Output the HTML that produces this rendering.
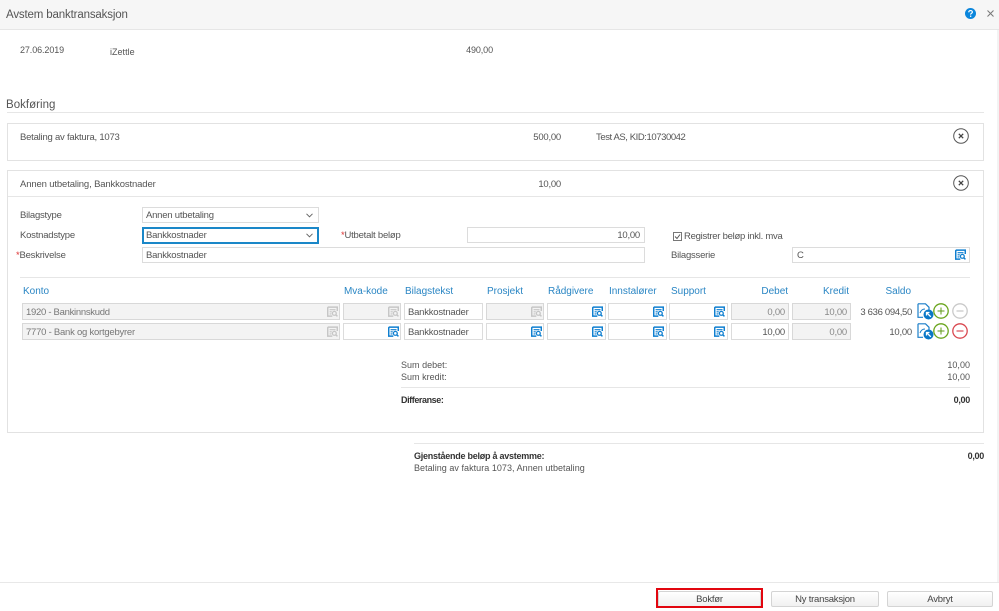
<!DOCTYPE html>
<html><head><meta charset="utf-8"><style>
html,body{margin:0;padding:0;background:#fff}
#p{position:relative;width:999px;height:611px;overflow:hidden;background:#fff;font-family:"Liberation Sans",sans-serif;font-size:9.5px;color:#555;letter-spacing:-.22px;filter:blur(.3px)}
.t{position:absolute;white-space:nowrap;line-height:12px;margin-top:1px}
.r{text-align:right}
.m{font-size:9px;letter-spacing:.02px;margin-top:0}
.w{font-weight:bold;color:#333;letter-spacing:-.28px}
.b{position:absolute;box-sizing:border-box;border:1px solid #dcdcdc;background:#fff}
.d{background:#f3f3f3;border-color:#d8d8d8}
.l{position:absolute;background:#e6e6e6;height:1px}
.h{position:absolute;white-space:nowrap;line-height:12px;color:#2a86c4;font-size:10px;letter-spacing:-.02px;margin-top:1px}
.s{color:#d33}
.btn{position:absolute;box-sizing:border-box;height:16px;top:591px;border:1px solid #d4d4d4;border-radius:2px;background:linear-gradient(#fff,#f0f0f0);text-align:center;line-height:15px;color:#444}
svg{position:absolute;overflow:visible}
</style></head><body><div id="p">
<svg width="0" height="0"><defs>
<symbol id="lk" viewBox="0 0 12 12"><path d="M.8 1.200h10.400v4.300M.8 1.200v9.800h5" fill="none" stroke="currentColor" stroke-width="1.600"/><path d="M2.800 4h6.500M2.800 6.300h2.400M2.800 8.700h2" stroke="currentColor" stroke-width="1.200"/><circle cx="8" cy="8" r="2.100" fill="none" stroke="currentColor" stroke-width="1.400"/><path d="M9.600 9.600l1.800 1.700" stroke="currentColor" stroke-width="1.600"/></symbol>
<symbol id="doc" viewBox="0 0 17 17"><path d="M1 .8h7.500l3.500 3.500v3M1 .8v13.500h5" fill="none" stroke="#1b7fc9" stroke-width="1.200"/><path d="M3 10c1-3 3-4 5-4" fill="none" stroke="#1b7fc9" stroke-width="1"/><circle cx="11.500" cy="11.500" r="5" fill="#0b78c8"/><path d="M13.800 13.800L10 10M9.500 12.500V9.500h3" fill="none" stroke="#fff" stroke-width="1.300"/></symbol>
</defs></svg>

<div style="position:absolute;left:0;top:0;width:999px;height:29px;background:#f6f6f6;border-bottom:1px solid #e6e6e6"></div>
<div style="position:absolute;left:997px;top:30px;width:2px;height:552px;background:#f3f3f3"></div>
<div class="t" style="left:6px;top:8px;font-size:11.500px;letter-spacing:-.15px;color:#555">Avstem banktransaksjon</div>
<svg style="left:965px;top:8px" width="11" height="11"><circle cx="5.500" cy="5.500" r="5.500" fill="#0b86dc"/><path d="M3.700 4.300C3.800 2 7.400 2 7.400 4.100 7.400 5.300 5.600 5.300 5.600 6.600" fill="none" stroke="#fff" stroke-width="1.200"/><rect x="5" y="7.600" width="1.300" height="1.300" fill="#fff"/></svg>
<svg style="left:987px;top:10px" width="7" height="7"><path d="M.5.500l6 6M6.500.500l-6 6" stroke="#777" stroke-width="1"/></svg>

<div class="t m" style="left:20px;top:44px;letter-spacing:-.1px">27.06.2019</div>
<div class="t m" style="left:110px;top:46px">iZettle</div>
<div class="t m r" style="left:440px;width:53px;top:44px;letter-spacing:-.1px">490,00</div>

<div class="t" style="left:6px;top:98px;font-size:11.500px;letter-spacing:.03px">Bokføring</div>
<div class="l" style="left:7px;top:112px;width:977px"></div>

<div class="b" style="left:7px;top:123px;width:977px;height:38px;border-color:#e2e2e2"></div>
<div class="t" style="left:20px;top:131px">Betaling av faktura, 1073</div>
<div class="t r" style="left:500px;width:61px;top:131px">500,00</div>
<div class="t" style="left:596px;top:131px;letter-spacing:-.42px">Test AS, KID:10730042</div>
<svg style="left:953px;top:128px" width="16" height="16"><circle cx="8" cy="8" r="7.300" fill="none" stroke="#555" stroke-width="1"/><path d="M5.800 5.800l4.400 4.400M10.200 5.800l-4.400 4.400" stroke="#444" stroke-width="1.300"/></svg>

<div class="b" style="left:7px;top:170px;width:977px;height:263px;border-color:#e2e2e2"></div>
<div class="l" style="left:8px;top:196px;width:975px"></div>
<div class="t" style="left:20px;top:178px;letter-spacing:-.14px">Annen utbetaling, Bankkostnader</div>
<div class="t r" style="left:500px;width:61px;top:178px">10,00</div>
<svg style="left:953px;top:175px" width="16" height="16"><circle cx="8" cy="8" r="7.300" fill="none" stroke="#555" stroke-width="1"/><path d="M5.800 5.800l4.400 4.400M10.200 5.800l-4.400 4.400" stroke="#444" stroke-width="1.300"/></svg>

<div class="t" style="left:20px;top:209px">Bilagstype</div>
<div class="b" style="left:142px;top:207px;width:177px;height:16px"></div>
<div class="t" style="left:146px;top:209px">Annen utbetaling</div>
<svg style="left:306px;top:213px" width="7" height="5"><path d="M.5.800l3 3 3-3" fill="none" stroke="#666"/></svg>

<div class="t" style="left:20px;top:229px">Kostnadstype</div>
<div class="b" style="left:142px;top:227px;width:177px;height:17px;border:2px solid #1a87c8"></div>
<div class="t" style="left:146px;top:229px">Bankkostnader</div>
<svg style="left:306px;top:233px" width="7" height="5"><path d="M.5.800l3 3 3-3" fill="none" stroke="#666"/></svg>

<div class="t" style="left:16px;top:249px"><span class="s">*</span>Beskrivelse</div>
<div class="b" style="left:142px;top:247px;width:503px;height:16px"></div>
<div class="t" style="left:146px;top:249px">Bankkostnader</div>

<div class="t" style="left:341px;top:229px"><span class="s">*</span>Utbetalt beløp</div>
<div class="b" style="left:467px;top:227px;width:178px;height:16px"></div>
<div class="t r" style="left:570px;width:70px;top:229px">10,00</div>

<svg style="left:673px;top:232px" width="9" height="9"><rect x=".5" y=".5" width="8" height="8" fill="#fff" stroke="#777"/><path d="M2 4.500l2 2 3-4" fill="none" stroke="#555"/></svg>
<div class="t" style="left:684px;top:230px;letter-spacing:-.26px">Registrer beløp inkl. mva</div>
<div class="t" style="left:671px;top:249px">Bilagsserie</div>
<div class="b" style="left:792px;top:247px;width:178px;height:16px"></div>
<div class="t" style="left:797px;top:249px">C</div>
<svg style="left:955px;top:249px;color:#0f7fd0" width="11" height="11"><use href="#lk"/></svg>

<div class="l" style="left:20px;top:277px;width:950px"></div>

<div class="h" style="left:23px;top:285px">Konto</div>
<div class="h" style="left:344px;top:285px">Mva-kode</div>
<div class="h" style="left:405px;top:285px">Bilagstekst</div>
<div class="h" style="left:487px;top:285px">Prosjekt</div>
<div class="h" style="left:548px;top:285px">Rådgivere</div>
<div class="h" style="left:609px;top:285px">Innstalører</div>
<div class="h" style="left:671px;top:285px">Support</div>
<div class="h r" style="left:730px;width:58px;top:285px">Debet</div>
<div class="h r" style="left:790px;width:59px;top:285px">Kredit</div>
<div class="h r" style="left:860px;width:51px;top:285px">Saldo</div>

<!-- row 1 -->
<div class="b d" style="left:22px;top:303px;width:318px;height:17px"></div>
<div class="t" style="left:26px;top:306px;color:#777;letter-spacing:-.29px">1920 - Bankinnskudd</div>
<svg style="left:327px;top:306px;color:#c6c6c6" width="11" height="11"><use href="#lk"/></svg>
<div class="b d" style="left:343px;top:303px;width:58px;height:17px"></div>
<svg style="left:388px;top:306px;color:#c6c6c6" width="11" height="11"><use href="#lk"/></svg>
<div class="b" style="left:404px;top:303px;width:79px;height:17px"></div>
<div class="t" style="left:408px;top:306px">Bankkostnader</div>
<div class="b d" style="left:486px;top:303px;width:58px;height:17px"></div>
<svg style="left:531px;top:306px;color:#c6c6c6" width="11" height="11"><use href="#lk"/></svg>
<div class="b" style="left:547px;top:303px;width:59px;height:17px"></div>
<svg style="left:592px;top:306px;color:#0f7fd0" width="11" height="11"><use href="#lk"/></svg>
<div class="b" style="left:608px;top:303px;width:59px;height:17px"></div>
<svg style="left:653px;top:306px;color:#0f7fd0" width="11" height="11"><use href="#lk"/></svg>
<div class="b" style="left:669px;top:303px;width:59px;height:17px"></div>
<svg style="left:714px;top:306px;color:#0f7fd0" width="11" height="11"><use href="#lk"/></svg>
<div class="b d" style="left:731px;top:303px;width:58px;height:17px"></div>
<div class="t r" style="left:740px;width:45px;top:306px;color:#888">0,00</div>
<div class="b d" style="left:792px;top:303px;width:59px;height:17px"></div>
<div class="t r" style="left:800px;width:47px;top:306px;color:#888">10,00</div>
<div class="t r" style="left:840px;width:72px;top:306px;letter-spacing:-.32px">3 636 094,50</div>
<svg style="left:917px;top:303px" width="17" height="17"><use href="#doc"/></svg>
<svg style="left:933px;top:303px" width="16" height="16"><circle cx="8" cy="8" r="7.200" fill="#fff" stroke="#6aa51d" stroke-width="1.300"/><path d="M8 4.500v7M4.500 8h7" stroke="#5f9a17" stroke-width="1"/></svg>
<svg style="left:952px;top:303px" width="16" height="16"><circle cx="8" cy="8" r="7.200" fill="#fff" stroke="#c9c9c9" stroke-width="1.300"/><path d="M4.500 8h7" stroke="#bbb" stroke-width="1"/></svg>

<!-- row 2 -->
<div class="b d" style="left:22px;top:323px;width:318px;height:17px"></div>
<div class="t" style="left:26px;top:326px;color:#777;letter-spacing:-.24px">7770 - Bank og kortgebyrer</div>
<svg style="left:327px;top:326px;color:#c6c6c6" width="11" height="11"><use href="#lk"/></svg>
<div class="b" style="left:343px;top:323px;width:58px;height:17px"></div>
<svg style="left:388px;top:326px;color:#0f7fd0" width="11" height="11"><use href="#lk"/></svg>
<div class="b" style="left:404px;top:323px;width:79px;height:17px"></div>
<div class="t" style="left:408px;top:326px">Bankkostnader</div>
<div class="b" style="left:486px;top:323px;width:58px;height:17px"></div>
<svg style="left:531px;top:326px;color:#0f7fd0" width="11" height="11"><use href="#lk"/></svg>
<div class="b" style="left:547px;top:323px;width:59px;height:17px"></div>
<svg style="left:592px;top:326px;color:#0f7fd0" width="11" height="11"><use href="#lk"/></svg>
<div class="b" style="left:608px;top:323px;width:59px;height:17px"></div>
<svg style="left:653px;top:326px;color:#0f7fd0" width="11" height="11"><use href="#lk"/></svg>
<div class="b" style="left:669px;top:323px;width:59px;height:17px"></div>
<svg style="left:714px;top:326px;color:#0f7fd0" width="11" height="11"><use href="#lk"/></svg>
<div class="b" style="left:731px;top:323px;width:58px;height:17px"></div>
<div class="t r" style="left:740px;width:45px;top:326px">10,00</div>
<div class="b d" style="left:792px;top:323px;width:59px;height:17px"></div>
<div class="t r" style="left:800px;width:47px;top:326px;color:#888">0,00</div>
<div class="t r" style="left:840px;width:72px;top:326px">10,00</div>
<svg style="left:917px;top:323px" width="17" height="17"><use href="#doc"/></svg>
<svg style="left:933px;top:323px" width="16" height="16"><circle cx="8" cy="8" r="7.200" fill="#fff" stroke="#6aa51d" stroke-width="1.300"/><path d="M8 4.500v7M4.500 8h7" stroke="#5f9a17" stroke-width="1"/></svg>
<svg style="left:952px;top:323px" width="16" height="16"><circle cx="8" cy="8" r="7.200" fill="#fff" stroke="#d9474f" stroke-width="1.300"/><path d="M4.500 8h7" stroke="#d02a34" stroke-width="1"/></svg>

<div class="t m" style="left:401px;top:359px">Sum debet:</div>
<div class="t m r" style="left:900px;width:70px;top:359px">10,00</div>
<div class="t m" style="left:401px;top:371px">Sum kredit:</div>
<div class="t m r" style="left:900px;width:70px;top:371px">10,00</div>
<div class="l" style="left:401px;top:387px;width:569px"></div>
<div class="t m w" style="left:401px;top:394px;letter-spacing:-.42px">Differanse:</div>
<div class="t m w r" style="left:900px;width:70px;top:394px">0,00</div>

<div class="l" style="left:414px;top:443px;width:570px"></div>
<div class="t m w" style="left:414px;top:450px;letter-spacing:-.25px">Gjenstående beløp å avstemme:</div>
<div class="t m w r" style="left:900px;width:84px;top:450px">0,00</div>
<div class="t m" style="left:414px;top:462px;letter-spacing:.04px">Betaling av faktura 1073, Annen utbetaling</div>

<div class="l" style="left:0;top:582px;width:999px;background:#e8e8e8"></div>
<div class="btn" style="left:658px;width:103px">Bokfør</div>
<div style="position:absolute;box-sizing:border-box;left:656px;top:588px;width:107px;height:20px;border:2px solid #e2060f"></div>
<div class="btn" style="left:771px;width:108px">Ny transaksjon</div>
<div class="btn" style="left:887px;width:106px">Avbryt</div>
</div></body></html>
